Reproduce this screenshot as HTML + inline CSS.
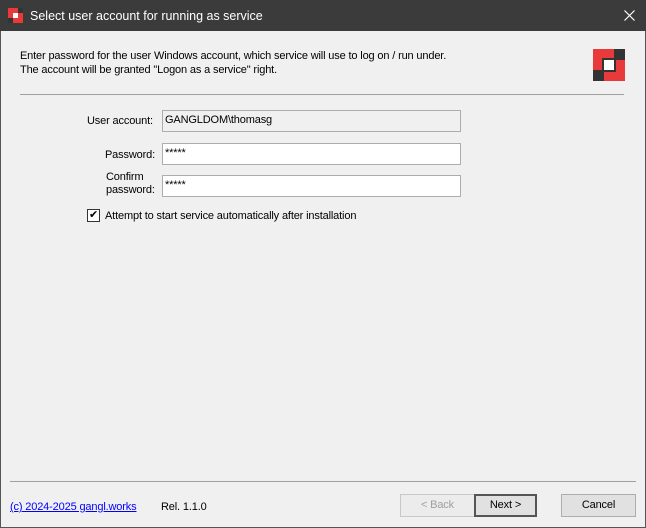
<!DOCTYPE html>
<html><head><style>
*{box-sizing:border-box;margin:0;padding:0}
body{width:646px;height:528px;overflow:hidden;background:#f0f0f0;font-family:"Liberation Sans",sans-serif;font-size:11px;letter-spacing:-0.15px;color:#000;position:relative}
.win{position:absolute;left:0;top:0;width:646px;height:528px;border:1px solid #555;border-top:none}
.title{position:absolute;left:0;top:0;width:646px;height:31px;background:#3b3b3b;color:#fff;font-size:12.5px;letter-spacing:0}
.a{position:absolute;white-space:nowrap}
.f{position:absolute;left:162px;width:299px;height:22px;border:1px solid #adadad;background:#fff;padding:3px 2px;font-size:11px}
.btn{position:absolute;top:494px;height:23px;border:1px solid #adadad;background:#e1e1e1;text-align:center;line-height:21px}
</style></head><body>
<div class="win"></div>
<div class="title">
 <svg class="a" style="left:8px;top:8px" width="15" height="15" viewBox="0 0 15 15"><rect width="15" height="15" fill="#e8393b"/><rect x="10" y="0" width="5" height="5" fill="#333"/><rect x="0" y="10" width="5" height="5" fill="#333"/><rect x="5" y="5" width="5" height="5" fill="#fff"/></svg>
 <div class="a" style="left:30px;top:9px">Select user account for running as service</div>
 <svg class="a" style="left:624px;top:10px" width="11" height="11" viewBox="0 0 11 11"><path d="M0.5 0.5L10.5 10.5M10.5 0.5L0.5 10.5" stroke="#fff" stroke-width="1.2"/></svg>
</div>
<div class="a" style="left:20px;top:50px">Enter password for the user Windows account, which service will use to log on / run under.</div>
<div class="a" style="left:20px;top:64px">The account will be granted "Logon as a service" right.</div>
<svg class="a" style="left:593px;top:49px" width="32" height="32" viewBox="0 0 32 32"><rect width="32" height="32" fill="#e8393b"/><rect x="21" y="0" width="11" height="11" fill="#333"/><rect x="0" y="21" width="11" height="11" fill="#333"/><rect x="9" y="9" width="14" height="14" fill="#333"/><rect x="11" y="11" width="10" height="10" fill="#fff"/></svg>
<div class="a" style="left:20px;top:94px;width:604px;height:1px;background:#a0a0a0"></div>
<div class="a" style="left:87px;top:115px">User account:</div>
<div class="f" style="top:110px;background:#f0f0f0">GANGLDOM\thomasg</div>
<div class="a" style="left:105px;top:149px">Password:</div>
<div class="f" style="top:143px">*****</div>
<div class="a" style="left:106px;top:171px;line-height:13px">Confirm<br>password:</div>
<div class="f" style="top:175px">*****</div>
<div class="a" style="left:87px;top:209px;width:13px;height:13px;border:1px solid #333;background:#fff;font-size:11px;line-height:11px;text-align:center">✔</div>
<div class="a" style="left:105px;top:210px">Attempt to start service automatically after installation</div>
<div class="a" style="left:10px;top:481px;width:626px;height:1px;background:#a0a0a0"></div>
<div class="a" style="left:10px;top:501px;color:#00f;text-decoration:underline">(c) 2024-2025  gangl.works</div>
<div class="a" style="left:161px;top:501px">Rel. 1.1.0</div>
<div class="btn" style="left:400px;width:75px;color:#a0a0a0;background:#ececec;border-color:#c8c8c8">&lt; Back</div>
<div class="btn" style="left:474px;width:63px;border:2px solid #555;line-height:19px">Next &gt;</div>
<div class="btn" style="left:561px;width:75px">Cancel</div>
</body></html>
